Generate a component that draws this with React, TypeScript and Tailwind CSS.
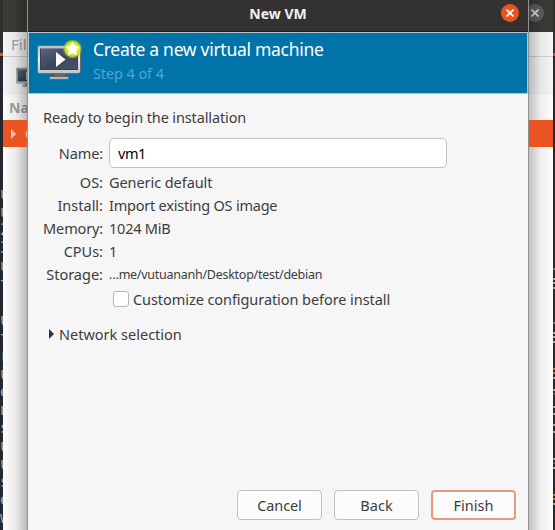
import React from "react";

const terminalLines = ["u", "u", "2", "3", "u", "t", " ", "u", "t", "r", "u", "e", "n", "s", "u", "u", "s", "e", "w"];
const marks = [
  { top: 268, tone: "bg-[#8f7650]" }, { top: 278, tone: "bg-[#a5a5a0]" },
  { top: 282, tone: "bg-[#a5a5a0]" }, { top: 287, tone: "bg-[#a5a5a0]" },
  { top: 322, tone: "bg-[#8f7650]" }, { top: 332, tone: "bg-[#a5a5a0]" },
  { top: 336, tone: "bg-[#a5a5a0]" }, { top: 341, tone: "bg-[#a5a5a0]" },
  { top: 368, tone: "bg-[#b07830]" }, { top: 372, tone: "bg-[#b07830]" },
  { top: 377, tone: "bg-[#a5a5a0]" }, { top: 389, tone: "bg-[#a5a5a0]" },
  { top: 393, tone: "bg-[#405078]" }, { top: 406, tone: "bg-[#a5a5a0]" },
  { top: 413, tone: "bg-[#a5a5a0]" }, { top: 424, tone: "bg-[#a5a5a0]" },
  { top: 431, tone: "bg-[#a5a5a0]" }, { top: 458, tone: "bg-[#a5a5a0]" },
  { top: 462, tone: "bg-[#405078]" }, { top: 467, tone: "bg-[#a5a5a0]" },
  { top: 494, tone: "bg-[#b07830]" }, { top: 498, tone: "bg-[#b07830]" },
  { top: 503, tone: "bg-[#a5a5a0]" },
];

function Monitor({ className }: { className: string }) {
  return (
    <svg className={className} viewBox="0 0 46 42" fill="none">
      <defs>
        <linearGradient id="bezel" x1="0" y1="0" x2="0" y2="1">
          <stop stopColor="#bcbdbc" /><stop offset=".5" stopColor="#eeeeed" /><stop offset="1" stopColor="#c2c3c1" />
        </linearGradient>
        <linearGradient id="screen" x1="0" y1="0" x2="1" y2="1">
          <stop stopColor="#56667d" /><stop offset=".48" stopColor="#3e4b60" /><stop offset=".52" stopColor="#39465b" /><stop offset="1" stopColor="#48566c" />
        </linearGradient>
        <radialGradient id="glow">
          <stop offset=".5" stopColor="#eff532" /><stop offset=".75" stopColor="#d4e51b" stopOpacity=".85" /><stop offset="1" stopColor="#9cc71c" stopOpacity="0" />
        </radialGradient>
      </defs>
      <path d="M17 34h11l1 4h-13z" fill="#66696a" />
      <rect x="12.5" y="36.5" width="19" height="3" rx="1" fill="#b5b7b5" stroke="#656766" />
      <rect x=".5" y="5.5" width="43" height="28" rx="2" fill="url(#bezel)" stroke="#6c6e6d" />
      <rect x="3.5" y="8.5" width="37" height="21" fill="url(#screen)" stroke="#354052" />
      <path d="M3 8.5h38" stroke="#7d8896" />
      <path d="M19 12v15l9.5-7.5z" fill="white" />
      <circle cx="35.5" cy="9" r="10" fill="url(#glow)" />
      <path d="m35.5 2.3 2 4.1 4.5.7-3.3 3.2.8 4.5-4-2.2-4 2.2.8-4.5L29 7.1l4.5-.7z" fill="white" stroke="white" strokeWidth=".8" />
    </svg>
  );
}

function CloseIcon() {
  return (
    <svg className="size-[8px]" viewBox="0 0 8 8">
      <path d="m.5.5 7 7m0-7-7 7" stroke="currentColor" strokeWidth="1.7" />
    </svg>
  );
}

function Row({ label, children }: { label: React.ReactNode; children: React.ReactNode }) {
  return (
    <div className="flex h-[23px] items-center whitespace-nowrap">
      <div className="flex w-[75px] shrink-0 justify-end">{label}</div>
      <div className="ml-[6px]">{children}</div>
    </div>
  );
}

function BackgroundWindow() {
  return (
    <div className="relative w-[550px] shrink-0 bg-[#fdfdfd] text-[#a3a3a3]">
      <div className="flex h-8 items-center justify-end bg-[#3c3b37] pr-[9px]">
        <div className="mb-[6px] flex size-[18px] items-center justify-center rounded-full bg-[#5e5e5e] text-[#dedede]"><CloseIcon /></div>
      </div>
      <div className="flex h-[25px] items-center border-b border-[#d0d0d0] bg-[#f6f6f6] pl-2 text-[15px]">File</div>
      <div className="flex h-[38px] items-center bg-[#f4f4f4] pl-[13px]"><Monitor className="h-[23px] w-[25px]" /></div>
      <div className="flex h-[25px] items-center pl-[6px] text-[14px] font-bold">Name</div>
      <div className="flex h-[27px] items-center bg-[#e95420] pl-2 text-[15px] text-[#f8c5b2]">
        <svg className="mr-[9px] h-[10px] w-[5px]" viewBox="0 0 5 10"><path d="M0 0v10l5-5z" fill="currentColor" /></svg>
        QEMU
      </div>
    </div>
  );
}

export default function App() {
  return (
    <div className="relative flex h-[530px] w-[555px] overflow-hidden bg-[#22282b] font-['Noto_Sans',sans-serif]">
      <div className="w-[3px] shrink-0 overflow-hidden bg-[#23272e]">
        <div className="h-[53px] bg-[#302f2f]" />
        <div className="h-[3px] bg-[#e95420]" />
        <div className="mt-[129px] font-['DejaVu_Sans_Mono',monospace] text-[15px] leading-[18px] text-[#9eaaad]">
          {terminalLines.map((line, i) => <div key={i} className="h-[18px]">{line}</div>)}
        </div>
      </div>
      <BackgroundWindow />
      <div className="relative w-[2px] bg-[#22292a]">
        <div className="h-[53px] bg-[#302f2f]" />
        <div className="h-[3px] bg-[#c6451a]" />
        {marks.map((m) => <div key={m.top} className={`absolute left-0 h-[2px] w-[2px] ${m.tone}`} style={{ top: m.top }} />)}
      </div>

      <div className="absolute top-0 left-[3px] h-[120px] w-[25px] bg-linear-to-r from-black/0 via-black/7 to-black/28" />
      <div className="absolute top-[147px] left-[3px] h-[383px] w-[25px] bg-linear-to-r from-black/0 via-black/7 to-black/28" />
      <div className="absolute top-0 left-[528px] h-[120px] w-[25px] bg-linear-to-l from-black/0 via-black/6 to-black/25" />
      <div className="absolute top-[147px] left-[528px] h-[383px] w-[25px] bg-linear-to-l from-black/0 via-black/6 to-black/25" />

      <main className="absolute top-0 left-[27px] flex h-[530px] w-[502px] flex-col border-x border-[#919191] bg-[#f6f6f6] text-[14.5px] leading-5 text-[#3d3d3d]">
        <header className="relative flex h-8 shrink-0 items-center justify-end border-b border-[#1f1e1f] bg-[#333132] pr-[9px]">
          <span className="absolute inset-x-0 top-1 text-center text-[14px] font-bold text-[#f2f2f2]"><span>New VM</span></span>
          <button className="mb-[5px] flex size-[18px] items-center justify-center rounded-full bg-[#e95420] text-white"><CloseIcon /></button>
        </header>
        <section className="flex h-[62px] shrink-0 border border-[#b7c4cc] bg-[#0073a9] pl-2">
          <Monitor className="mt-[7px] h-[42px] w-[46px] shrink-0" />
          <div className="ml-[10px] pt-[4px] whitespace-nowrap">
            <h1 className="h-6 text-[17.5px] leading-6 tracking-[-0.29px] text-white"><span>Create a new virtual machine</span></h1>
            <p className="mt-[2px] text-[14.5px] leading-5 tracking-[-0.1px] text-[#4ba7db]"><span>Step 4 of 4</span></p>
          </div>
        </section>
        <section className="shrink-0">
          <p className="mt-[13px] ml-[15px] h-5 tracking-[-0.13px]"><span>Ready to begin the installation</span></p>
          <div className="mt-[11px] mb-[2px] flex h-[30px] items-center">
            <div className="flex w-[75px] justify-end"><span className="tracking-[-0.1px]">Name:</span></div>
            <div className="ml-[6px] flex h-[30px] w-[338px] items-center rounded-[5px] border border-[#c2c2c2] bg-white pl-2 text-black"><span className="tracking-[-0.4px]">vm1</span></div>
          </div>
          <Row label={<span>OS:</span>}><span className="tracking-[-0.07px]">Generic default</span></Row>
          <Row label={<span>Install:</span>}><span className="tracking-[-0.22px]">Import existing OS image</span></Row>
          <Row label={<span className="tracking-[-0.15px]">Memory:</span>}><span className="tracking-[-0.22px]">1024 MiB</span></Row>
          <Row label={<span>CPUs:</span>}><span>1</span></Row>
          <Row label={<span>Storage:</span>}><span className="text-[12.5px] tracking-[-0.26px]">…me/vutuananh/Desktop/test/debian</span></Row>
          <label className="mt-[4px] ml-[85px] flex h-5 items-center">
            <span className="mr-[4px] size-4 rounded-[3px] border border-[#b5b5b5] bg-white" />
            <span className="tracking-[-0.07px]">Customize configuration before install</span>
          </label>
          <div className="mt-[15px] ml-[21px] flex h-5 items-center">
            <svg className="mr-[5px] h-[10px] w-[5px]" viewBox="0 0 5 10"><path d="M0 0v10l5-5z" fill="#333" /></svg>
            <span>Network selection</span>
          </div>
        </section>
        <footer className="mt-auto mb-[10px] flex justify-end gap-3 pr-3">
          <button className="h-[30px] w-[85px] rounded-[4px] border border-[#c0c0c0] bg-[#fcfcfc] pb-px"><span className="tracking-[-0.1px]">Cancel</span></button>
          <button className="h-[30px] w-[85px] rounded-[4px] border border-[#c0c0c0] bg-[#fcfcfc] pb-px"><span>Back</span></button>
          <button className="h-[30px] w-[85px] rounded-[4px] border-2 border-[#e99980] bg-[#fcfcfc] pb-px"><span>Finish</span></button>
        </footer>
      </main>
    </div>
  );
}
